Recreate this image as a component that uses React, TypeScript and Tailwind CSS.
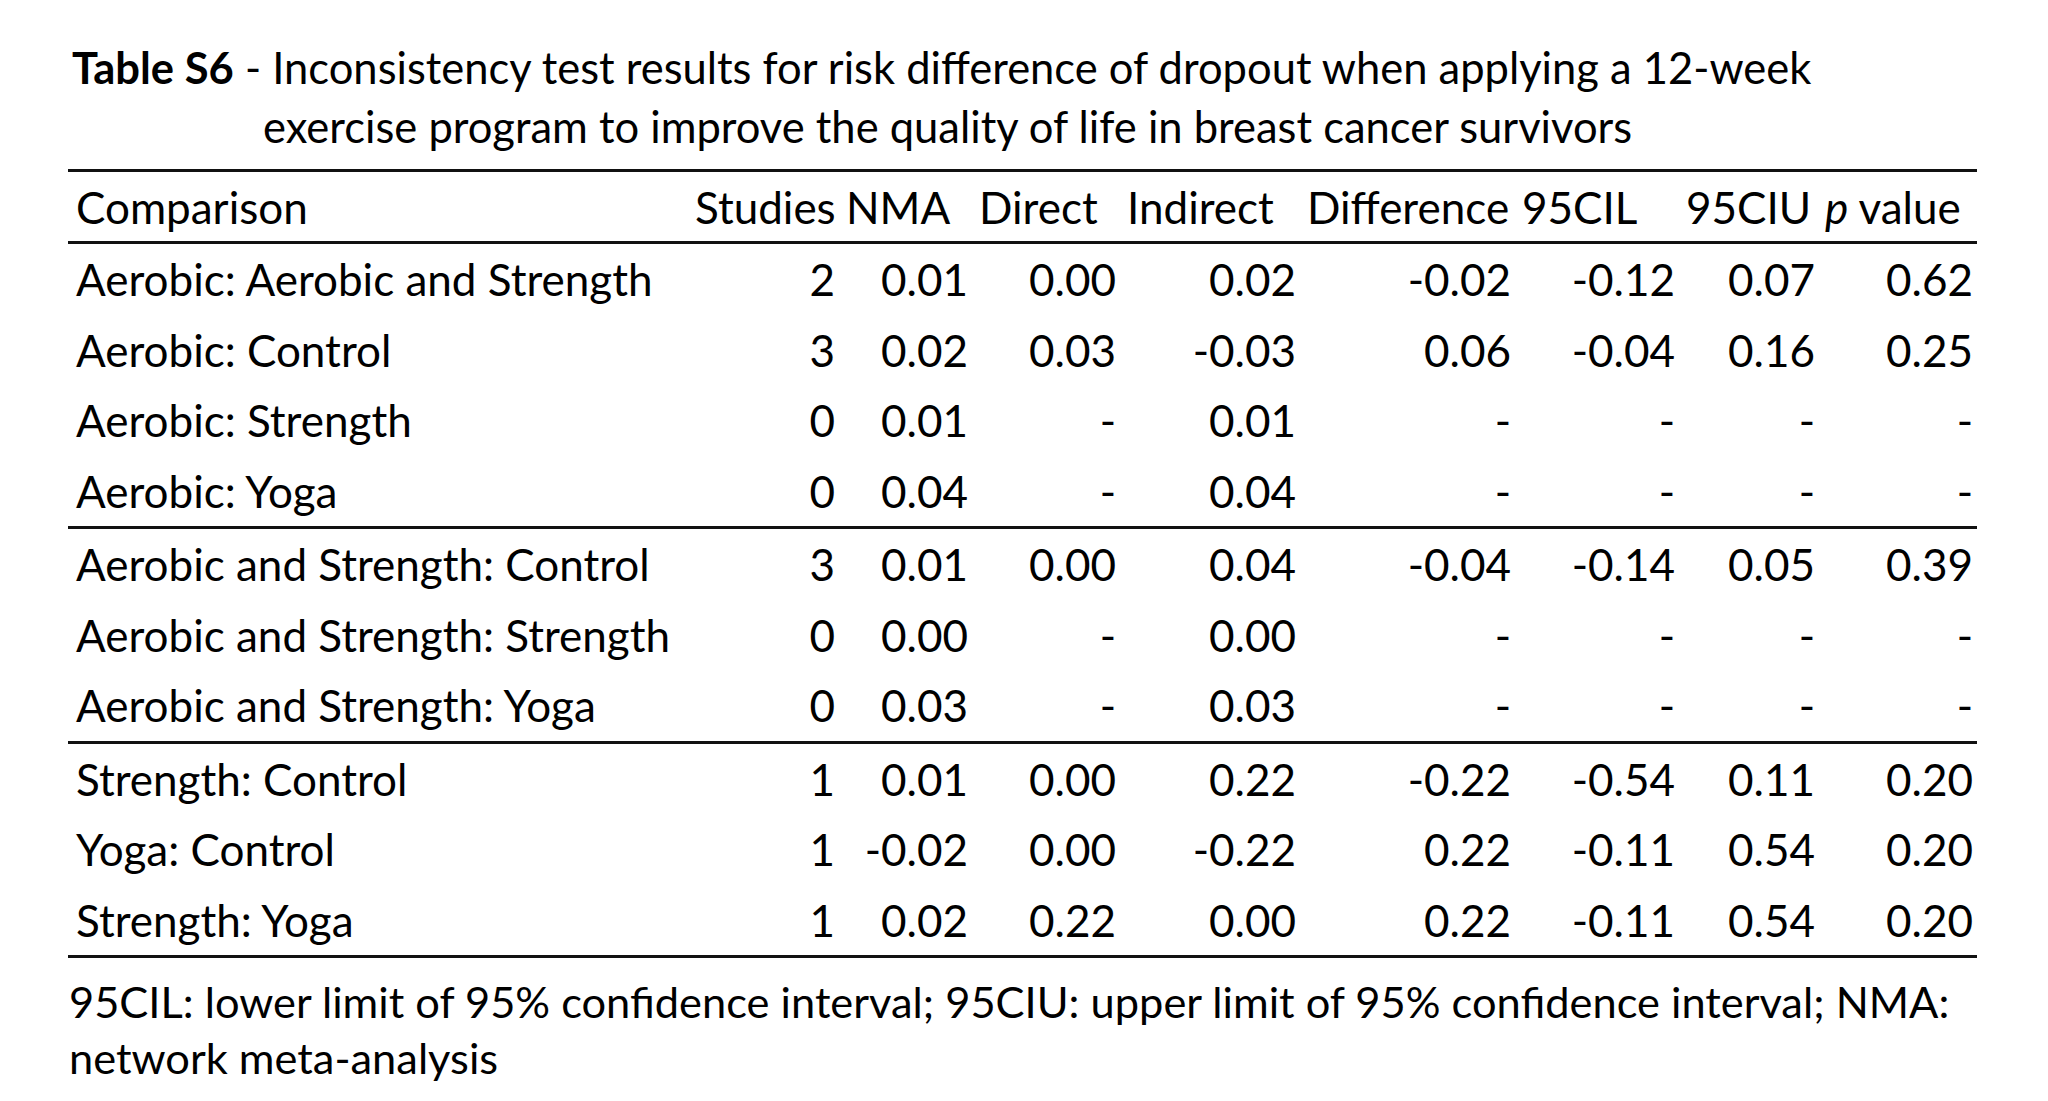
const ROWS: string[][][] = [
  [
    ["Aerobic: Aerobic and Strength", "2", "0.01", "0.00", "0.02", "-0.02", "-0.12", "0.07", "0.62"],
    ["Aerobic: Control", "3", "0.02", "0.03", "-0.03", "0.06", "-0.04", "0.16", "0.25"],
    ["Aerobic: Strength", "0", "0.01", "-", "0.01", "-", "-", "-", "-"],
    ["Aerobic: Yoga", "0", "0.04", "-", "0.04", "-", "-", "-", "-"],
  ],
  [
    ["Aerobic and Strength: Control", "3", "0.01", "0.00", "0.04", "-0.04", "-0.14", "0.05", "0.39"],
    ["Aerobic and Strength: Strength", "0", "0.00", "-", "0.00", "-", "-", "-", "-"],
    ["Aerobic and Strength: Yoga", "0", "0.03", "-", "0.03", "-", "-", "-", "-"],
  ],
  [
    ["Strength: Control", "1", "0.01", "0.00", "0.22", "-0.22", "-0.54", "0.11", "0.20"],
    ["Yoga: Control", "1", "-0.02", "0.00", "-0.22", "0.22", "-0.11", "0.54", "0.20"],
    ["Strength: Yoga", "1", "0.02", "0.22", "0.00", "0.22", "-0.11", "0.54", "0.20"],
  ],
];

const GRID =
  "grid grid-cols-[620px_151px_133px_148px_180px_215px_164px_140px_158px]";

function Rule() {
  return <div className="h-[3px] w-full bg-[#111]" />;
}

function Row({ cells }: { cells: string[] }) {
  return (
    <div className={`${GRID} h-[70.5px] items-center`}>
      {cells.map((c, i) => (
        <div
          key={i}
          className={i === 0 ? "whitespace-nowrap px-[8px]" : "whitespace-nowrap pl-[7px] pr-[4px] text-right"}
        >
          {c}
        </div>
      ))}
    </div>
  );
}

export default function App() {
  return (
    <div className="h-[1101px] w-full bg-white text-black [font-family:Lato,'Open_Sans',sans-serif]">
      {/* Caption */}
      <div className="pl-[72px] pt-[38px]">
        <p className="pl-[191px] -indent-[191px] text-[43.5px] leading-[59px]">
          <span className="font-bold">Table S6</span> - Inconsistency test results for risk
          difference of dropout when applying a 12-week
          <br />
          exercise program to improve the quality of life in breast cancer survivors
        </p>
      </div>

      {/* Table */}
      <div className="ml-[68px] mt-[13px] w-[1909px] text-[44px] leading-none">
        <Rule />
        <div className={`${GRID} h-[69px] items-center`}>
          {["Comparison", "Studies", "NMA", "Direct", "Indirect", "Difference", "95CIL", "95CIU"].map(
            (h, i) => (
              <div key={h} className={i === 0 ? "whitespace-nowrap px-[8px]" : "whitespace-nowrap px-[7px]"}>
                {h}
              </div>
            ),
          )}
          <div className="whitespace-nowrap px-[6px]">
            <span className="italic">p</span> value
          </div>
        </div>
        <Rule />
        {ROWS.map((group, g) => (
          <div key={g}>
            {group.map((r) => (
              <Row key={r[0]} cells={r} />
            ))}
            <Rule />
          </div>
        ))}
      </div>

      {/* Footnote */}
      <p className="ml-[69px] mt-[15px] text-[43.4px] leading-[56px]">
        95CIL: lower limit of 95% confidence interval; 95CIU: upper limit of 95% confidence interval; NMA:
        <br />
        network meta-analysis
      </p>
    </div>
  );
}
